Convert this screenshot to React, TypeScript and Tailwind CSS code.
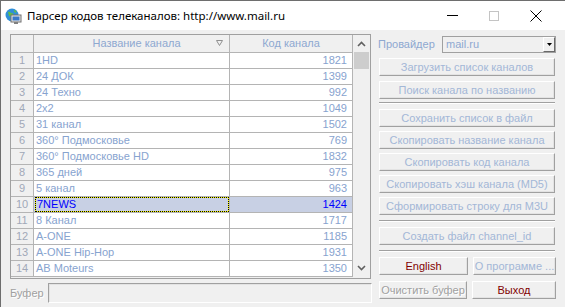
import React from "react";

const channels = [
  { id: 1, name: "1HD", code: 1821 },
  { id: 2, name: "24 ДОК", code: 1399 },
  { id: 3, name: "24 Техно", code: 992 },
  { id: 4, name: "2x2", code: 1049 },
  { id: 5, name: "31 канал", code: 1502 },
  { id: 6, name: "360° Подмосковье", code: 769 },
  { id: 7, name: "360° Подмосковье HD", code: 1832 },
  { id: 8, name: "365 дней", code: 975 },
  { id: 9, name: "5 канал", code: 963 },
  { id: 10, name: "7NEWS", code: 1424 },
  { id: 11, name: "8 Канал", code: 1717 },
  { id: 12, name: "A-ONE", code: 1185 },
  { id: 13, name: "A-ONE Hip-Hop", code: 1931 },
  { id: 14, name: "AB Moteurs", code: 1350 },
];

const btn =
  "h-[18px] flex items-center justify-center bg-[#f0f0f0] border border-t-white border-l-white border-r-[#a0a0a0] border-b-[#a0a0a0] shadow-[inset_-1px_-1px_0_#e3e3e3] text-[11px] leading-none";

const Sep = ({ className = "" }: { className?: string }) => (
  <div className={`ml-[1px] w-[176px] h-[2px] border-t border-[#a0a0a0] border-b border-b-white ${className}`} />
);

const AppIcon = () => (
  <svg width="17" height="16" viewBox="0 0 17 16">
    <circle cx="7" cy="7" r="6.5" fill="#2f8fd8" />
    <path d="M3 4 C5 3 6 6 8 5 C9 7 6 9 4 8 Z" fill="#5fbf4a" />
    <path d="M9 2 C11 2 12 4 11 5 C10 4 9 4 9 2 Z" fill="#5fbf4a" />
    <rect x="6" y="7" width="10" height="7" fill="#e8e8e8" stroke="#707070" strokeWidth="1" />
    <rect x="7.5" y="8.5" width="7" height="4" fill="#3a78c8" />
    <rect x="9" y="14" width="4" height="2" fill="#808080" />
  </svg>
);

export default function App() {
  return (
    <div className="w-[565px] h-[307px] flex flex-col bg-[#f0f0f0] border-l border-t border-[#6e6e6e] overflow-hidden font-['Liberation_Sans',Arial,sans-serif]">
      {/* title bar */}
      <div className="h-[29px] bg-white flex items-center shrink-0">
        <div className="ml-[4px] mt-[1px]">
          <AppIcon />
        </div>
        <div className="ml-[5px] text-[11.5px] text-black font-['Noto_Sans',sans-serif]">
          Парсер кодов телеканалов: http://www.mail.ru
        </div>
        <div className="ml-auto mr-[8px] flex h-full">
          <div className="w-[42px] flex items-center justify-center">
            <div className="w-[11px] h-px bg-black" />
          </div>
          <div className="w-[42px] flex items-center justify-center">
            <div className="w-[10px] h-[10px] border border-[#c4c4c4]" />
          </div>
          <div className="w-[42px] flex items-center justify-center">
            <svg width="12" height="12" viewBox="0 0 12 12">
              <path d="M0.5 0.5 L11.5 11.5 M11.5 0.5 L0.5 11.5" stroke="#000" strokeWidth="1" />
            </svg>
          </div>
        </div>
      </div>

      {/* body */}
      <div className="flex-1 flex pl-[9px]">
        {/* left column */}
        <div className="w-[362px] pt-[4px] flex flex-col">
          <div className="h-[245px] w-[361px] border border-[#a0a0a0] flex overflow-hidden bg-[#f0f0f0]">
            <div className="w-[342px] flex flex-col text-[11px]">
              {/* header */}
              <div className="flex h-[18px] shrink-0 border-b border-[#b4b4b4] bg-[#f0f0f0] text-[#8ea8d0]">
                <div className="w-[23px] border-r border-[#b4b4b4]" />
                <div className="w-[196px] border-r border-[#b4b4b4] relative flex items-center justify-center pl-[10px]">
                  Название канала
                  <svg className="absolute right-[6px] top-[5px]" width="7" height="6" viewBox="0 0 7 6">
                    <path d="M0.5 0.5 H6.5 L3.5 5.5 Z" fill="none" stroke="#909090" strokeWidth="1" />
                  </svg>
                </div>
                <div className="w-[123px] border-r border-[#b4b4b4] flex items-center justify-center">
                  Код канала
                </div>
              </div>
              {channels.map((c) => {
                const sel = c.id === 10;
                return (
                  <div key={c.id} className="flex h-[16px] shrink-0 border-b border-[#b4b4b4]">
                    <div className="w-[23px] border-r border-[#b4b4b4] bg-[#f0f0f0] flex items-center justify-center text-[#a0a8b8]">
                      {c.id}
                    </div>
                    <div
                      className={`w-[196px] border-r border-[#b4b4b4] flex items-center pl-[1px] ${
                        sel ? "bg-[#c8d0e4] text-[#0000ff]" : "bg-white text-[#87a3cf]"
                      }`}
                    >
                      <div
                        className={`h-full w-full flex items-center pl-[1px] ${
                          sel ? "border border-[#ffff00] outline-1 outline-dotted outline-black -outline-offset-1" : ""
                        }`}
                      >
                        {c.name}
                      </div>
                    </div>
                    <div
                      className={`w-[123px] border-r border-[#b4b4b4] flex items-center justify-end pr-[5px] ${
                        sel ? "bg-[#c8d0e4] text-[#0000ff]" : "bg-white text-[#87a3cf]"
                      }`}
                    >
                      {c.code}
                    </div>
                  </div>
                );
              })}
            </div>
            {/* scrollbar */}
            <div className="w-[17px] flex flex-col bg-[#f0f0f0]">
              <div className="h-[17px] flex items-center justify-center">
                <svg width="9" height="6" viewBox="0 0 9 6">
                  <path d="M1 5 L4.5 1.5 L8 5" fill="none" stroke="#606060" strokeWidth="1.6" />
                </svg>
              </div>
              <div className="mx-[1px] h-[17px] bg-[#cdcdcd]" />
              <div className="flex-1" />
              <div className="h-[17px] mb-[2px] flex items-center justify-center">
                <svg width="9" height="6" viewBox="0 0 9 6">
                  <path d="M1 1 L4.5 4.5 L8 1" fill="none" stroke="#606060" strokeWidth="1.6" />
                </svg>
              </div>
            </div>
          </div>

          {/* buffer */}
          <div className="mt-[4px] h-[20px] flex items-center">
            <div className="w-[38px] text-[11px] text-[#a0a0a0] [text-shadow:1px_1px_0_#fff]">Буфер</div>
            <div className="h-[20px] flex-1 border border-t-[#a0a0a0] border-l-[#a0a0a0] border-r-white border-b-white shadow-[inset_1px_1px_0_#e3e3e3] bg-[#f0f0f0]" />
          </div>
        </div>

        {/* right column */}
        <div className="ml-[6px] w-[178px] pt-[6px] flex flex-col text-[11px]">
          <div className="h-[17px] flex items-center">
            <div className="text-[#8ea8d0]">Провайдер</div>
            <div className="ml-auto w-[114px] h-[17px] border border-[#a0a0a0] bg-[#f0f0f0] flex items-center">
              <div className="flex-1 pl-[3px] text-[#8ea8d0]">mail.ru</div>
              <div className="w-[12px] h-[15px] bg-[#f0f0f0] border border-t-white border-l-white border-r-[#696969] border-b-[#696969] flex items-center justify-center">
                <svg width="5" height="3" viewBox="0 0 5 3">
                  <path d="M0 0 H5 L2.5 3 Z" fill="#000" />
                </svg>
              </div>
            </div>
          </div>

          <div className="ml-[1px] w-[176px] flex flex-col mt-[5px]">
            <div className={`${btn} text-[#a3b7d7]`}>Загрузить список каналов</div>
            <div className={`${btn} text-[#a3b7d7] mt-[5px]`}>Поиск канала по названию</div>
          </div>
          <Sep className="mt-[3px]" />
          <div className="ml-[1px] w-[176px] flex flex-col gap-[4px] mt-[5px]">
            <div className={`${btn} text-[#a3b7d7]`}>Сохранить список в файл</div>
            <div className={`${btn} text-[#a3b7d7]`}>Скопировать название канала</div>
            <div className={`${btn} text-[#a3b7d7]`}>Скопировать код канала</div>
            <div className={`${btn} text-[#a3b7d7]`}>Скопировать хэш канала (MD5)</div>
            <div className={`${btn} text-[#a3b7d7]`}>Сформировать строку для M3U</div>
          </div>
          <Sep className="mt-[5px]" />
          <div className="ml-[1px] w-[176px] mt-[5px]">
            <div className={`${btn} text-[#a3b7d7]`}>Создать файл channel_id</div>
          </div>
          <Sep className="mt-[5px]" />
          <div className="ml-[1px] w-[177px] flex gap-[5px] mt-[5px]">
            <div className={`${btn} w-[89px] text-[#800000]`}>English</div>
            <div className={`${btn} flex-1 text-[#a3b7d7]`}>О программе ...</div>
          </div>
          <div className="ml-[1px] w-[177px] flex gap-[5px] mt-[6px]">
            <div className={`${btn} w-[88px] text-[#a0a0a0] [text-shadow:1px_1px_0_#fff]`}>Очистить буфер</div>
            <div className={`${btn} flex-1 text-[#800000]`}>Выход</div>
          </div>
        </div>
      </div>
    </div>
  );
}
